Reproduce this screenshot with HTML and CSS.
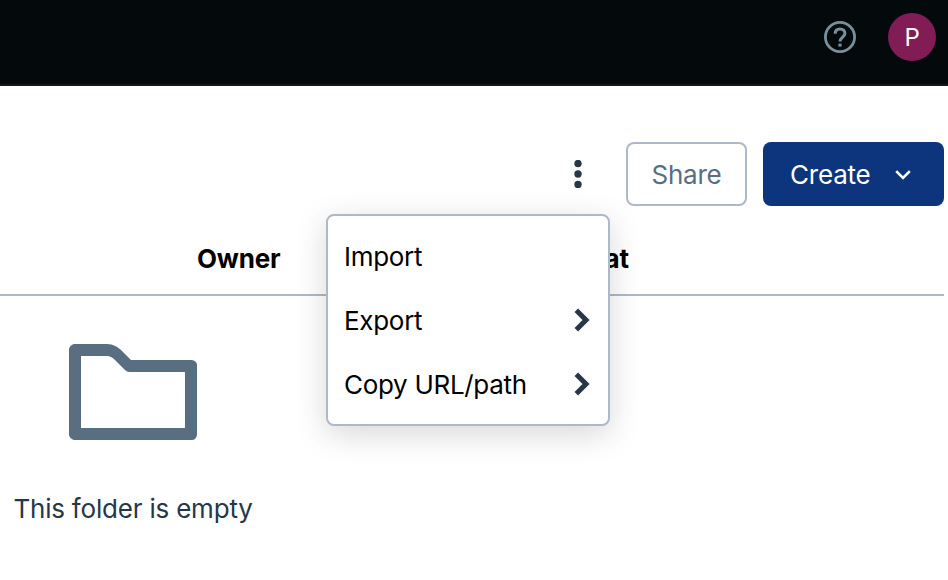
FILE: index.html
```html
<!DOCTYPE html>
<html lang="en">
<head>
<meta charset="utf-8">
<title>Folder</title>
<link rel="stylesheet" href="styles.css">
</head>
<body>
<header class="topbar">
  <svg class="help" viewBox="0 0 32 32" width="32" height="32" fill="none" stroke="#78909c">
    <circle cx="16" cy="16" r="14.6" stroke-width="2.8"/>
    <path d="M11.200 12.800C11.200 9.700 13 7.900 16 7.900s4.900 1.900 4.900 4.500c0 3.400-4.900 4.100-4.900 8.100" stroke-width="3"/>
    <path d="M16 22.600v3" stroke-width="3.200"/>
  </svg>
  <div class="avatar">P</div>
</header>
<main class="content">
  <div class="toolbar">
    <button class="more" aria-label="More">
      <svg viewBox="0 0 8 28" width="8" height="28" fill="#263747"><circle cx="4" cy="3.5" r="3.700"/><circle cx="4" cy="14" r="3.700"/><circle cx="4" cy="24.5" r="3.700"/></svg>
    </button>
    <button class="btn share">Share</button>
    <button class="btn create"><span>Create</span>
      <svg viewBox="0 0 16 10" width="16" height="10" fill="none" stroke="#fff" stroke-width="2.6"><path d="M1.200 1.200 8 8l6.800-6.800"/></svg>
    </button>
    <div class="menu">
      <div class="item"><span>Import</span></div>
      <div class="item"><span>Export</span><svg class="chevron" viewBox="0 0 16 24" width="16" height="24"><path d="M2.300 2.300 12 12l-9.700 9.700"/></svg></div>
      <div class="item"><span>Copy URL/path</span><svg class="chevron" viewBox="0 0 16 24" width="16" height="24"><path d="M2.300 2.300 12 12l-9.700 9.700"/></svg></div>
    </div>
  </div>
  <div class="columns"><span>Owner</span><span class="format">Format</span></div>
  <section class="empty">
    <svg viewBox="0 0 128 96" width="128" height="96" fill="#5a6e82" fill-rule="evenodd"><path d="M5 0H38C44 0 49 3 53 7L62 16H123Q128 17 128 21V91Q127 96 123 96H5Q1 95 0 91V5Q1 1 5 0ZM12 12V84H116V28H60Q58 28 56 26L46 16Q42 12 38 12Z"/></svg>
    <p>This folder is empty</p>
  </section>
</main>
</body>
</html>
```
FILE: styles.css
```css
* { box-sizing: border-box; }
body {
  margin: 0;
  background: #fff;
  color: #000;
  font: 26px/32px Inter, sans-serif;
  letter-spacing: -0.2px;
  overflow: hidden;
}
.topbar {
  height: 86px;
  padding: 0 12px 12px 0;
  display: flex;
  justify-content: flex-end;
  align-items: center;
  gap: 32px;
  background: #04090c;
  border-bottom: 2px solid #14181c;
}
.help { display: block; margin-top: 1px; }
.avatar {
  width: 48px;
  height: 48px;
  margin-top: 1px;
  border-radius: 50%;
  background: #811c56;
  color: #fff;
  font-size: 24px;
  line-height: 50px;
  text-align: center;
}
.content { padding-right: 4px; }
.toolbar {
  position: relative;
  display: flex;
  justify-content: flex-end;
  padding-top: 56px;
}
.more, .btn {
  height: 64px;
  border: 0;
  font: inherit;
  letter-spacing: -0.2px;
  display: flex;
  align-items: center;
}
.more { width: 64px; margin-right: 16px; justify-content: center; background: none; }
.btn { border-radius: 8px; padding: 2px 0 0; }
.share {
  width: 121px;
  justify-content: center;
  margin-right: 16px;
  background: #fff;
  border: 2px solid #adb9c8;
  color: #5a6e82;
}
.create {
  width: 181px;
  padding-left: 27px;
  gap: 24px;
  background: #0c357e;
  color: #fff;
}
.menu {
  position: absolute;
  z-index: 1;
  top: 128px;
  right: 334px;
  width: 284px;
  padding: 8px 18px 8px 16px;
  background: #fff;
  border: 2px solid #adb9c8;
  border-radius: 8px;
  box-shadow: 0 8px 32px rgba(0, 0, 0, .16);
}
.item {
  height: 64px;
  display: flex;
  align-items: center;
  justify-content: space-between;
}
.item span { padding-top: 2px; letter-spacing: -0.3px; }
.chevron { fill: none; stroke: #263747; stroke-width: 5; }
.columns {
  height: 90px;
  display: flex;
  align-items: center;
  padding: 18px 0 0 197px;
  border-bottom: 2px solid #adb9c8;
  font-weight: 700;
}
.format { margin-left: 260px; }
.empty {
  width: 266px;
  padding-top: 48px;
  text-align: center;
  color: #263747;
}
.empty svg { display: block; margin: 0 auto; }
.empty p { margin: 53px 0 0; }
```
